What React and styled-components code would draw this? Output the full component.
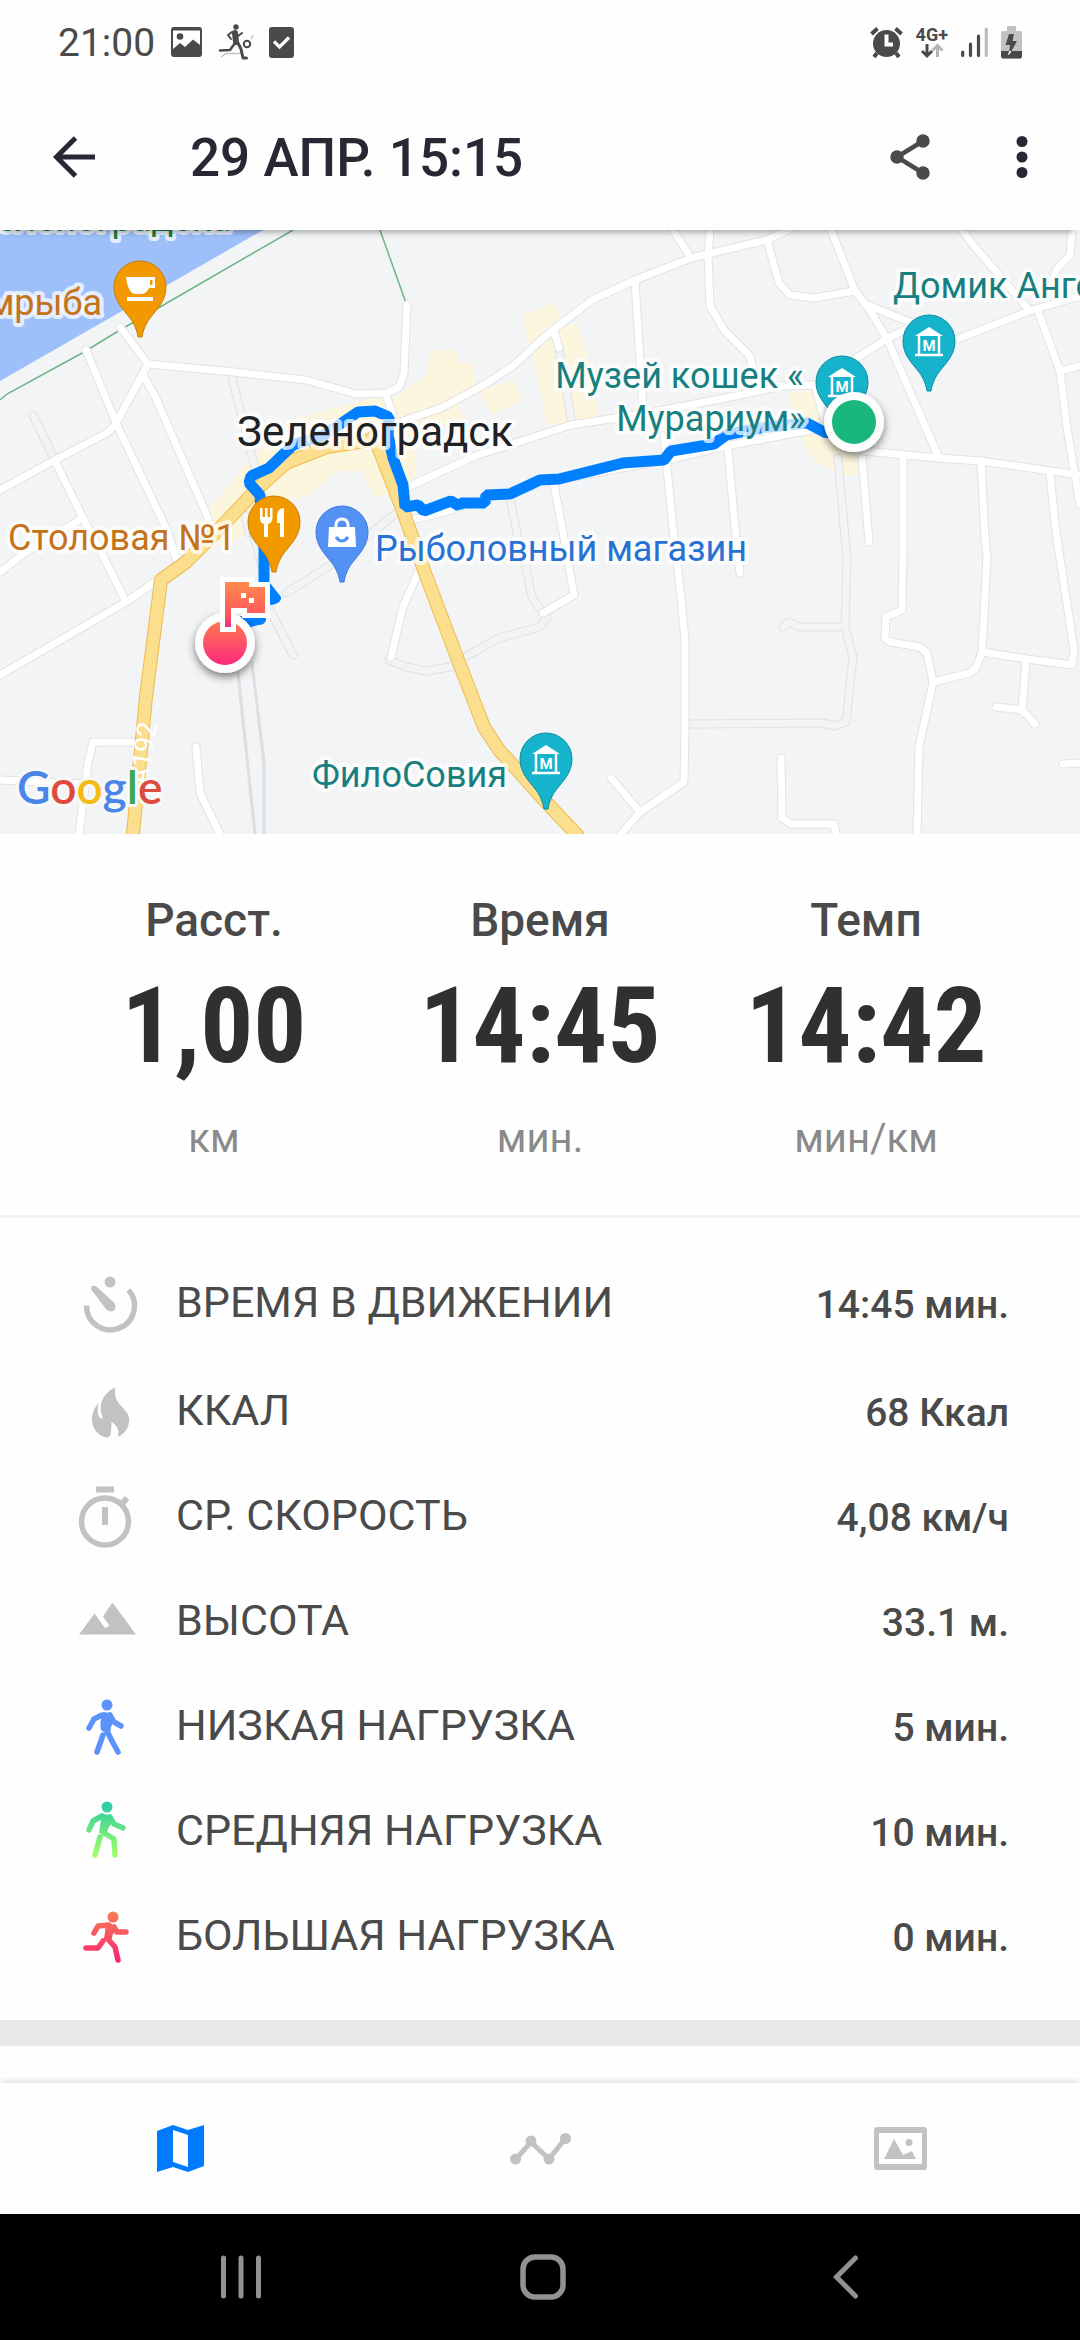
import React from "react";
import styled, { createGlobalStyle } from "styled-components";

const GlobalStyle = createGlobalStyle`
  * { box-sizing: border-box; }
  body { margin: 0; background: #fefefe; }
  button { font: inherit; border: 0; padding: 0; background: none; cursor: pointer; }
  svg { display: block; overflow: visible; flex: none; }
`;

const Page = styled.div`
  display: flex;
  flex-direction: column;
  min-height: 100vh;
  overflow: hidden;
  background: #fefefe;
  color: #4a4a4a;
  font-family: Roboto, "Noto Sans", sans-serif;
`;

/* ---------- status bar ---------- */

const StatusBar = styled.div`
  display: flex;
  align-items: center;
  justify-content: space-between;
  height: 84px;
  padding: 0 58px;
`;

const StatusGroup = styled.div`
  display: flex;
  align-items: center;
  gap: ${(p) => p.$gap}px;
`;

const Clock = styled.time`
  padding-top: 2px;
  font-size: 39px;
  line-height: 44px;
`;

const Network = styled.div`
  display: flex;
  flex-direction: column;
  align-items: center;
  font-size: 18px;
  line-height: 18px;
  font-weight: 700;
`;

/* ---------- app bar ---------- */

const AppBar = styled.header`
  position: relative;
  z-index: 1;
  display: flex;
  align-items: center;
  height: 146px;
  padding: 0 34px 0 48px;
  background: #fefefe;
  color: #282733;
  box-shadow: 0 8px 6px -6px rgba(0, 0, 0, 0.35);
`;

const Title = styled.h1`
  flex: 1;
  margin: 0 0 0 90px;
  padding-top: 2px;
  font-size: 53px;
  line-height: 62px;
  font-weight: 500;
`;

const IconButton = styled.button`
  display: flex;
  align-items: center;
  justify-content: center;
  width: ${(p) => p.$size}px;
  height: ${(p) => p.$size}px;
  color: ${(p) => p.$color || "inherit"};
`;

const Actions = styled.div`
  display: flex;
  gap: 64px;
`;

/* ---------- map ---------- */

const MapPanel = styled.section`
  height: 604px;
  overflow: hidden;
  background: #f2f4f6;
`;

const MapDrawing = styled.svg`
  width: 100%;
  height: 100%;
  font-family: Roboto, "Noto Sans", sans-serif;
`;

const PlaceName = styled.text`
  font-size: ${(p) => p.$size || 36}px;
  fill: ${(p) => p.$color};
  text-anchor: ${(p) => p.$anchor || "start"};
  stroke: rgba(255, 255, 255, 0.72);
  stroke-width: 8px;
  stroke-linejoin: round;
  paint-order: stroke;
`;

const GoogleMark = styled.text`
  font-family: Lato, Roboto, sans-serif;
  font-size: 46px;
  font-weight: 600;
  stroke: #f8f8f8;
  stroke-width: 6px;
  stroke-linejoin: round;
  paint-order: stroke;
`;

const RoadNumber = styled.text`
  font-size: 27px;
  fill: #ffffff;
`;

const PinLetter = styled.text`
  font-size: 15px;
  font-weight: 700;
  fill: #ffffff;
  text-anchor: middle;
`;

const ghostRoads = [
  "M33 185L55 230",
  "M232 148L255 238",
  "M245 285L249 303",
  "M286 363L331 335L399 281",
  "M270 380L293 425",
  "M510 268L518 308L525 333L532 367L543 383",
  "M389 430L406 437L427 441L455 436",
  "M463 428L499 408L540 397L547 387",
  "M838 228L845 308L847 327L845 397L853 427L846 492L835 496L822 493L690 494",
  "M845 397H800L789 392L783 397",
  "M559 118L571 188",
];

const roads = [
  "M120 97L148 134L115 195L107 203L55 230L0 260",
  "M148 134L234 142L306 150L356 164L387 163L399 157L404 143L407 75",
  "M86 120L117 195L165 296L177 330",
  "M143 145L155 166L208 288",
  "M55 231L83 288L100 320L126 372",
  "M0 342L26 322L83 288",
  "M0 445L126 372L155 352",
  "M386 165L393 185",
  "M403 191L441 178L482 156L513 136L540 111L554 99L592 70L635 50L691 28L767 10L788 0",
  "M410 256L475 226L540 205L571 195L616 188L664 180L735 166L781 156L815 155L826 198",
  "M415 289L448 281L485 268L555 250L671 229L726 216L822 198",
  "M864 221L939 228L981 231L1080 245",
  "M673 0L691 28",
  "M710 0L708 25L710 76L724 100L750 126L753 140L758 160",
  "M635 50L640 131L643 180",
  "M767 10L779 53L790 65L814 68L855 61",
  "M831 0L855 61L870 80L888 111L939 228",
  "M870 76L912 93",
  "M840 140L857 128L888 108L925 90",
  "M930 119L955 110L1032 80L1080 66",
  "M962 0L974 16L1029 80",
  "M1072 0L1070 25L1056 40L1052 54",
  "M1038 81L1060 141L1067 198L1080 275",
  "M1060 141L1080 136",
  "M1050 245L1056 302L1074 420L1072 435L1027 429L982 422",
  "M981 231L985 308L987 327L982 422L976 438L970 443L933 452",
  "M903 228V327L902 380L886 387L885 408L890 412L920 417L927 423L933 452L919 517L917 604",
  "M862 228L869 312",
  "M728 221L736 308L740 343",
  "M664 205L667 238L674 308L681 367L685 410V493L684 552L640 582L621 604",
  "M611 548L640 582",
  "M781 528L782 588L791 594H834L836 604",
  "M1026 430L1022 480L996 477",
  "M1022 480L1035 494",
  "M1063 534L1080 533",
  "M554 255L564 308L574 365L543 383",
  "M136 512H93L88 533L79 604",
  "M0 550L85 554",
  "M196 517L200 563L220 604",
  "M418 343L403 377L391 427",
  "M554 101L559 118",
];

const highways = [
  "M133 604L146 467L161 350L186 332L222 296L258 258L286 233L327 217L372 210",
  "M374 206L403 281L425 343L458 430L484 497L499 520L547 573L578 606",
];

const districts = [
  "M200 291L248 231L289 191L327 180L372 168L399 165L427 145L430 121L455 120L460 133H473L477 158L458 175L465 188L413 205L417 245L396 261L375 268L362 241H337L310 265L275 275L238 310L205 320Z",
  "M479 161L513 150L523 170L492 185Z",
  "M522 85L554 73L564 93L578 95L592 141L599 188L567 195H547L536 140Z",
  "M788 163L815 160L826 198L860 225L858 246H843L833 241L815 231L802 211Z",
];

const route =
  "M854 192L826 203L807 193L760 198L726 205L714 214L671 221L664 230L623 233L559 249L540 250L510 264L486 265L485 273H461L459 276L451 271L424 281L418 275L405 277L403 255L393 228L388 205L389 187L375 181L358 182L324 205L293 215L269 238L251 246L249 253L260 265L261 281L264 320V355";

const pinShape =
  "M-26 0A26 26 0 0 1 26 0C26 14 17 22 10 31C5 38 3 44 2 50H-2C-3 44 -5 38 -10 31C-17 22 -26 14 -26 0Z";

function Pin({ x, y, color, edge, children }) {
  return (
    <g transform={`translate(${x} ${y})`}>
      <path d={pinShape} fill={color} stroke={edge} strokeWidth="1" />
      {children}
    </g>
  );
}

function MuseumPin({ x, y }) {
  return (
    <Pin x={x} y={y} color="#15b4cc" edge="#0d8b9d">
      <path d="M0 -14L14 -5H-14Z" fill="#fff" />
      <path d="M-10 -5V14M10 -5V14M-14 14H14" stroke="#fff" strokeWidth="2.5" fill="none" />
      <PinLetter y="10">M</PinLetter>
    </Pin>
  );
}

function RouteMap() {
  return (
    <MapDrawing viewBox="0 0 1080 604" preserveAspectRatio="xMidYMid slice" role="img" aria-label="Карта маршрута">
      <defs>
        <linearGradient id="finish" x1="0" y1="0" x2="0" y2="1">
          <stop offset="0" stopColor="#ff7a50" />
          <stop offset="1" stopColor="#fb2a7d" />
        </linearGradient>
        <linearGradient id="flag" x1="0" y1="0" x2="0" y2="1">
          <stop offset="0" stopColor="#ff8a4c" />
          <stop offset="0.7" stopColor="#ff5a5c" />
          <stop offset="1" stopColor="#e8307c" />
        </linearGradient>
        <filter id="lift" x="-40%" y="-40%" width="180%" height="180%">
          <feDropShadow dx="0" dy="4" stdDeviation="4" floodOpacity="0.5" />
        </filter>
      </defs>

      <path d="M0 0H263L0 151Z" fill="#9dbffa" />
      {districts.map((d) => (
        <path key={d} d={d} fill="#fcf6df" />
      ))}
      <path d="M293 0L160 77L120 100L84 122L7 164L0 170M380 0L406 73" fill="none" stroke="#6fb583" strokeWidth="1.5" />

      <g fill="none" strokeLinejoin="round" strokeLinecap="round">
        {ghostRoads.map((d) => (
          <path key={d} d={d} stroke="#dfe1e3" strokeWidth="9" />
        ))}
        {ghostRoads.map((d) => (
          <path key={d} d={d} stroke="#f1f3f4" strokeWidth="7" />
        ))}
        <path d="M238 443L255 604M252 433L264 533V604" stroke="#dcdfe1" strokeWidth="3" />
        <path d="M249 303L270 380" stroke="#dcdfe1" strokeWidth="1" />
        {roads.map((d) => (
          <path key={d} d={d} stroke="#e1e3e5" strokeWidth="9" />
        ))}
        {roads.map((d) => (
          <path key={d} d={d} stroke="#ffffff" strokeWidth="7" />
        ))}
        {highways.map((d) => (
          <path key={d} d={d} stroke="#eebb4d" strokeWidth="14" />
        ))}
        {highways.map((d) => (
          <path key={d} d={d} stroke="#fbdf8f" strokeWidth="12" />
        ))}
        <path d={route} stroke="#0080ff" strokeWidth="11" strokeLinejoin="bevel" />
      </g>
      <path d="M258 353H270L281 367Q282 373 272 375L258 372ZM240 386H266V390Q265 395 258 395L248 398Z" fill="#0080ff" />

      <RoadNumber transform="translate(148 556) rotate(-82)">А192</RoadNumber>

      <PlaceName x="231" y="1" $color="#188038" $anchor="end">Зеленоградска</PlaceName>
      <PlaceName x="102" y="85" $color="#c5731a" $anchor="end">мрыба</PlaceName>
      <PlaceName x="237" y="216" $color="#202124" $size="42">Зеленоградск</PlaceName>
      <PlaceName x="8" y="320" $color="#c5731a">Столовая №1</PlaceName>
      <PlaceName x="375" y="331" $color="#2672d4">Рыболовный магазин</PlaceName>
      <PlaceName x="312" y="557" $color="#17807f">ФилоСовия</PlaceName>
      <PlaceName x="804" y="158" $color="#17807f" $anchor="end">Музей кошек «</PlaceName>
      <PlaceName x="806" y="201" $color="#17807f" $anchor="end">Мурариум»</PlaceName>
      <PlaceName x="893" y="68" $color="#17807f">Домик Анге</PlaceName>

      <Pin x={140} y={57} color="#f29900" edge="#c77e05">
        <path d="M-14 -10H15V1H9Q7 6 2 7H-5Q-12 6 -14 -10ZM10 -7V-2H12.500V-7Z" fill="#fff" fillRule="evenodd" />
        <rect x="-13" y="10" width="26" height="4" fill="#fff" />
      </Pin>
      <Pin x={274} y={292} color="#f29900" edge="#c77e05">
        <path d="M-14 -14H-11.500V-5H-9V-14H-6.500V-5H-4V-14H-1.500V-4Q-2 1 -6 2V15H-10V2Q-14 1 -14 -4ZM3 1V-7Q4 -14 10 -14V15H6V1Z" fill="#fff" />
      </Pin>
      <Pin x={342} y={302} color="#5491f5" edge="#3f77d8">
        <path d="M-13 -5H13L14 15H-14Z" fill="#fff" />
        <path d="M-6 -5V-8Q-5 -13 0 -13Q5 -13 6 -8V-5" stroke="#fff" strokeWidth="3" fill="none" />
        <path d="M-6 5Q0 13 6 5" stroke="#5491f5" strokeWidth="3" fill="none" />
      </Pin>
      <MuseumPin x={842} y={152} />
      <MuseumPin x={929} y={111} />
      <MuseumPin x={546} y={529} />

      <g filter="url(#lift)">
        <circle cx="854" cy="192" r="30" fill="#fdfdfd" />
        <circle cx="225" cy="413" r="30" fill="#fdfdfd" />
      </g>
      <circle cx="854" cy="192" r="22" fill="#1ab77c" />
      <circle cx="225" cy="413" r="22" fill="url(#finish)" />
      <path
        d="M225 352H249V357H265V383H247V378H231V397H225Z"
        fill="url(#flag)"
        stroke="#fff"
        strokeWidth="10"
        paintOrder="stroke"
      />
      <path d="M241 363H246V368H241ZM249 368H254V373H249Z" fill="#fff" />

      <GoogleMark x="17" y="574">
        <tspan fill="#4a86e8">G</tspan>
        <tspan fill="#dc4b3e">o</tspan>
        <tspan fill="#f4bb15">o</tspan>
        <tspan fill="#4a86e8">g</tspan>
        <tspan fill="#3aa757">l</tspan>
        <tspan fill="#dc4b3e">e</tspan>
      </GoogleMark>
    </MapDrawing>
  );
}

/* ---------- main figures ---------- */

const Summary = styled.section`
  display: grid;
  grid-template-columns: repeat(3, 1fr);
  padding: 60px 51px 44px;
  border-bottom: 3px solid #f2f2f2;
`;

const Figure = styled.div`
  display: flex;
  flex-direction: column;
  align-items: center;
`;

const FigureName = styled.h2`
  margin: 0;
  font-size: 46px;
  line-height: 52px;
  font-weight: 500;
`;

const FigureValue = styled.strong`
  font-family: "Roboto Condensed", "Liberation Sans Narrow", Roboto, sans-serif;
  font-size: 105px;
  line-height: 161px;
  font-weight: 700;
  color: #303032;
`;

const FigureUnit = styled.span`
  font-size: 40px;
  line-height: 64px;
  color: #8a8a8a;
`;

/* ---------- details ---------- */

const Details = styled.dl`
  margin: 0;
  padding: 31px 71px 33px 78px;
`;

const DetailRow = styled.div`
  display: flex;
  align-items: center;
  height: 105px;
  &:first-child { margin-bottom: 3px; }
`;

const DetailName = styled.dt`
  flex: 1;
  margin-left: 38px;
  font-size: 43px;
  line-height: 50px;
`;

const DetailValue = styled.dd`
  margin: 0;
  padding-top: 6px;
  font-size: 39px;
  line-height: 44px;
  font-weight: 500;
`;

const Separator = styled.div`
  height: 26px;
  background: #e8e8e8;
`;

const Spacer = styled.div`
  flex: 1;
  min-height: 37px;
`;

/* ---------- bottom bars ---------- */

const TabBar = styled.nav`
  position: relative;
  display: grid;
  grid-template-columns: repeat(3, 1fr);
  height: 131px;
  background: #fefefe;
  box-shadow: 0 -2px 6px rgba(0, 0, 0, 0.12);
`;

const Tab = styled.button`
  display: flex;
  align-items: center;
  justify-content: center;
  color: ${(p) => (p.$active ? "#007bff" : "#c2c2c2")};
`;

const SystemNav = styled.nav`
  position: relative;
  display: grid;
  grid-template-columns: repeat(3, 1fr);
  height: 126px;
  padding: 0 84px 0 90px;
  background: #000000;
`;

const SystemKey = styled.button`
  display: flex;
  align-items: center;
  justify-content: center;
  color: #929292;
`;

/* ---------- row icons ---------- */

function Cell({ children }) {
  return (
    <svg width="60" height="60" viewBox="0 0 60 60" aria-hidden="true">
      {children}
    </svg>
  );
}

const MovingIcon = () => (
  <Cell>
    <circle cx="32" cy="10" r="5.5" fill="#c2c2c2" />
    <path d="M8.500 33.500A24 24 0 1 0 50.500 18" fill="none" stroke="#c2c2c2" strokeWidth="5.500" />
    <path d="M14 14Q17 13 19 15L36.500 31Q39 36 36 38.500Q31 41 28 37L13.500 18Q12.500 16 14 14Z" fill="#c2c2c2" />
  </Cell>
);

const FireIcon = () => (
  <Cell>
    <path
      d="M37.500 7.500C28 11 21 21 23 33C24 36 26 38 23.500 39C19.500 37 19 30 20.500 23C16 28 13.500 35 14 41C15 50 21 56 28 57.500C34 58 33 50 33.500 42C39 45 41.500 50 40 57C48 53 52 46 51 38C49 27 34 24 37.500 7.500Z"
      fill="#c2c2c2"
    />
  </Cell>
);

const StopwatchIcon = () => (
  <Cell>
    <g fill="none" stroke="#c2c2c2">
      <circle cx="27" cy="36.500" r="23.500" strokeWidth="5.500" />
      <path d="M18 4.500H36" strokeWidth="6" />
      <path d="M27 22V40" strokeWidth="6" />
      <path d="M43 20L49 13" strokeWidth="6" />
    </g>
  </Cell>
);

const MountainIcon = () => (
  <Cell>
    <path d="M1 44.500L16.500 23.500L27 38L31.500 36L25 26.500L34.500 12.500L58 44.500Z" fill="#c2c2c2" />
  </Cell>
);

const poses = {
  low: {
    colors: ["#5b93fb", "#5b93fb"],
    head: [29, 10],
    torso: "M25 17L32 18Q36 28 33 32L32 39L29 39L23 35Q21 28 25 17Z",
    limbs: "M24 20L16 24L11 33M32 20L36 27L43 31M25 40L19 57M29 36L34 46L40 57",
  },
  medium: {
    colors: ["#2fcca5", "#a2ff66"],
    head: [29, 7],
    torso: "M24 14L33 15Q36 22 31 27L28 35L21 33Q22 26 24 14Z",
    limbs: "M24 16L15 21L11 30M32 17L36 24L45 28M22 37L17 55M26 33L36 39L37 55",
  },
  high: {
    colors: ["#f78154", "#f9266f"],
    head: [35, 12],
    torso: "M28 18L37 20Q39 25 35 29L33 36L26 35Q27 27 28 18Z",
    limbs: "M31 20L20 21L16 28M36 22L39 27H48M25 36L20 43H8M29 33L37 42L40 55",
  },
};

function PersonIcon({ pose }) {
  const { colors, head, torso, limbs } = poses[pose];
  const paint = `url(#pose-${pose})`;
  return (
    <Cell>
      <defs>
        <linearGradient id={`pose-${pose}`} gradientUnits="userSpaceOnUse" x1="0" y1="5" x2="0" y2="56">
          <stop offset="0" stopColor={colors[0]} />
          <stop offset="1" stopColor={colors[1]} />
        </linearGradient>
      </defs>
      <circle cx={head[0]} cy={head[1]} r="5.500" fill={paint} />
      <path d={torso} fill={paint} />
      <path d={limbs} fill="none" stroke={paint} strokeWidth="5.500" strokeLinecap="round" strokeLinejoin="round" />
    </Cell>
  );
}

const figures = [
  { name: "Расст.", value: "1,00", unit: "км" },
  { name: "Время", value: "14:45", unit: "мин." },
  { name: "Темп", value: "14:42", unit: "мин/км" },
];

const details = [
  { icon: <MovingIcon />, name: "ВРЕМЯ В ДВИЖЕНИИ", value: "14:45 мин." },
  { icon: <FireIcon />, name: "ККАЛ", value: "68 Ккал" },
  { icon: <StopwatchIcon />, name: "СР. СКОРОСТЬ", value: "4,08 км/ч" },
  { icon: <MountainIcon />, name: "ВЫСОТА", value: "33.1 м." },
  { icon: <PersonIcon pose="low" />, name: "НИЗКАЯ НАГРУЗКА", value: "5 мин." },
  { icon: <PersonIcon pose="medium" />, name: "СРЕДНЯЯ НАГРУЗКА", value: "10 мин." },
  { icon: <PersonIcon pose="high" />, name: "БОЛЬШАЯ НАГРУЗКА", value: "0 мин." },
];

export default function App() {
  return (
    <Page>
      <GlobalStyle />
      <StatusBar>
        <StatusGroup $gap={16}>
          <Clock>21:00</Clock>
          <svg width="31" height="30" viewBox="0 0 31 30" fill="#4a4a4a">
            <path
              fillRule="evenodd"
              d="M3 0H28Q31 0 31 3V27Q31 30 28 30H3Q0 30 0 27V3Q0 0 3 0ZM2 3.500V22L9 16L14 20L22 12.500L29 18V3.500Z"
            />
            <circle cx="9" cy="9.500" r="3.300" />
          </svg>
          <svg width="35" height="36" viewBox="0 0 35 36">
            <path d="M3 33L8 29.500H24M33 15L35 11" stroke="#c4c4c4" strokeWidth="1.500" fill="none" />
            <g fill="none" stroke="#4a4a4a" strokeLinecap="round" strokeLinejoin="round">
              <path d="M17 9L18 18" strokeWidth="6" />
              <path d="M14 8L10 11L13 15M20 12L24 9" strokeWidth="2" />
              <path d="M20 19L23 25L25 34H28.500" strokeWidth="3" />
              <path d="M17 19L12 26L2 26.500" strokeWidth="2.500" />
              <circle cx="29" cy="20" r="3.200" strokeWidth="2" />
            </g>
            <circle cx="18" cy="3" r="2.700" fill="#4a4a4a" />
          </svg>
          <svg width="25" height="31" viewBox="0 0 25 31">
            <rect width="25" height="31" rx="3" fill="#4a4a4a" />
            <path d="M5 14.500L10.500 20L20 10.500" stroke="#fff" strokeWidth="3.200" fill="none" />
          </svg>
        </StatusGroup>
        <StatusGroup $gap={13}>
          <svg width="33" height="31" viewBox="0 0 33 31">
            <circle cx="16.500" cy="16.500" r="13.500" fill="#4a4a4a" />
            <path d="M1.500 7L7.500 1.500M31.500 7L25.500 1.500M7 26L4 30M26 26L29 30" stroke="#4a4a4a" strokeWidth="4" />
            <path d="M16.500 7.500V17.500H23" stroke="#fff" strokeWidth="4" fill="none" />
          </svg>
          <Network>
            4G+
            <svg width="22" height="14" viewBox="0 0 22 14" fill="none" strokeWidth="3">
              <path d="M6 0V12M1 7L6 12L11 7" stroke="#4a4a4a" />
              <path d="M16.500 13V2M11.500 6.500L16.500 1.500L21.500 6.500" stroke="#b4b4b4" />
            </svg>
          </Network>
          <svg width="27" height="30" viewBox="0 0 27 30" strokeLinecap="round" strokeWidth="3.200">
            <path d="M1.700 25V28.500M9.500 17V28.500M17.500 9V28.500" stroke="#4a4a4a" />
            <path d="M25.300 2V28.500" stroke="#bcbcbc" />
          </svg>
          <svg width="21" height="33" viewBox="0 0 21 33">
            <path d="M6 0H15V5H19Q21 5 21 7V30Q21 32.500 19 32.500H2Q0 32.500 0 30V7Q0 5 2 5H6Z" fill="#c2c2c2" />
            <path d="M0 25H21V30Q21 32.500 19 32.500H2Q0 32.500 0 30Z" fill="#4a4a4a" />
            <path d="M8 8H13L11.500 15H16L10 26L8 28L9 19H4.500Z" fill="#4a4a4a" />
            <path d="M8.500 25H10.500L8 29L7 28Z" fill="#fff" />
          </svg>
        </StatusGroup>
      </StatusBar>

      <AppBar>
        <IconButton type="button" aria-label="Назад" $size={52}>
          <svg width="42" height="42" viewBox="0 0 42 42" fill="none" stroke="currentColor" strokeWidth="5">
            <path d="M42 21H4M22.500 2L3.500 21L22.500 40" />
          </svg>
        </IconButton>
        <Title>29 АПР. 15:15</Title>
        <Actions>
          <IconButton type="button" aria-label="Поделиться" $size={48} $color="#4a4a4a">
            <svg width="40" height="46" viewBox="0 0 40 46" fill="currentColor">
              <path d="M33 7L7 23L33 39" fill="none" stroke="currentColor" strokeWidth="4.500" />
              <circle cx="33" cy="7" r="6.700" />
              <circle cx="7" cy="23" r="6.700" />
              <circle cx="33" cy="39" r="6.700" />
            </svg>
          </IconButton>
          <IconButton type="button" aria-label="Ещё" $size={48}>
            <svg width="12" height="42" viewBox="0 0 12 42" fill="currentColor">
              <circle cx="6" cy="5.500" r="5.500" />
              <circle cx="6" cy="21" r="5.500" />
              <circle cx="6" cy="36.500" r="5.500" />
            </svg>
          </IconButton>
        </Actions>
      </AppBar>

      <MapPanel>
        <RouteMap />
      </MapPanel>

      <Summary>
        {figures.map((f) => (
          <Figure key={f.name}>
            <FigureName>{f.name}</FigureName>
            <FigureValue>{f.value}</FigureValue>
            <FigureUnit>{f.unit}</FigureUnit>
          </Figure>
        ))}
      </Summary>

      <Details>
        {details.map((d) => (
          <DetailRow key={d.name}>
            {d.icon}
            <DetailName>{d.name}</DetailName>
            <DetailValue>{d.value}</DetailValue>
          </DetailRow>
        ))}
      </Details>

      <Separator />
      <Spacer />

      <TabBar>
        <Tab type="button" aria-label="Карта" $active>
          <svg width="47" height="47" viewBox="0 0 47 47" fill="currentColor">
            <path fillRule="evenodd" d="M0 6L16 0L31 5L47 0V41L31 47L16 42L0 47ZM16 5V37L31 42V10Z" />
          </svg>
        </Tab>
        <Tab type="button" aria-label="График">
          <svg width="61" height="32" viewBox="0 0 61 32" fill="currentColor">
            <path d="M6 26L21 9L39 26L55 6" fill="none" stroke="currentColor" strokeWidth="5" />
            <circle cx="5.500" cy="26" r="5.500" />
            <circle cx="21" cy="8" r="5.500" />
            <circle cx="39" cy="26" r="5.500" />
            <circle cx="55.500" cy="5.500" r="5.500" />
          </svg>
        </Tab>
        <Tab type="button" aria-label="Фото">
          <svg width="53" height="43" viewBox="0 0 53 43" fill="currentColor">
            <path
              fillRule="evenodd"
              d="M3 0H50Q53 0 53 3V40Q53 43 50 43H3Q0 43 0 40V3Q0 0 3 0ZM5 6V37H48V6ZM10 32L20 12L29 28L38 24L42 32Z"
            />
            <circle cx="35" cy="15.500" r="3.500" />
          </svg>
        </Tab>
      </TabBar>

      <SystemNav>
        <SystemKey type="button" aria-label="Недавние">
          <svg width="40" height="44" viewBox="0 0 40 44" stroke="currentColor" strokeWidth="5" strokeLinecap="round">
            <path d="M2.500 3V41M20 3V41M37.500 3V41" />
          </svg>
        </SystemKey>
        <SystemKey type="button" aria-label="Домой">
          <svg width="46" height="46" viewBox="0 0 46 46" fill="none" stroke="currentColor" strokeWidth="5.500">
            <rect x="3" y="3" width="40" height="40" rx="12" />
          </svg>
        </SystemKey>
        <SystemKey type="button" aria-label="Назад">
          <svg width="25" height="44" viewBox="0 0 25 44" fill="none" stroke="currentColor" strokeWidth="5" strokeLinecap="round">
            <path d="M22.500 3L3.500 22L22.500 41" />
          </svg>
        </SystemKey>
      </SystemNav>
    </Page>
  );
}
